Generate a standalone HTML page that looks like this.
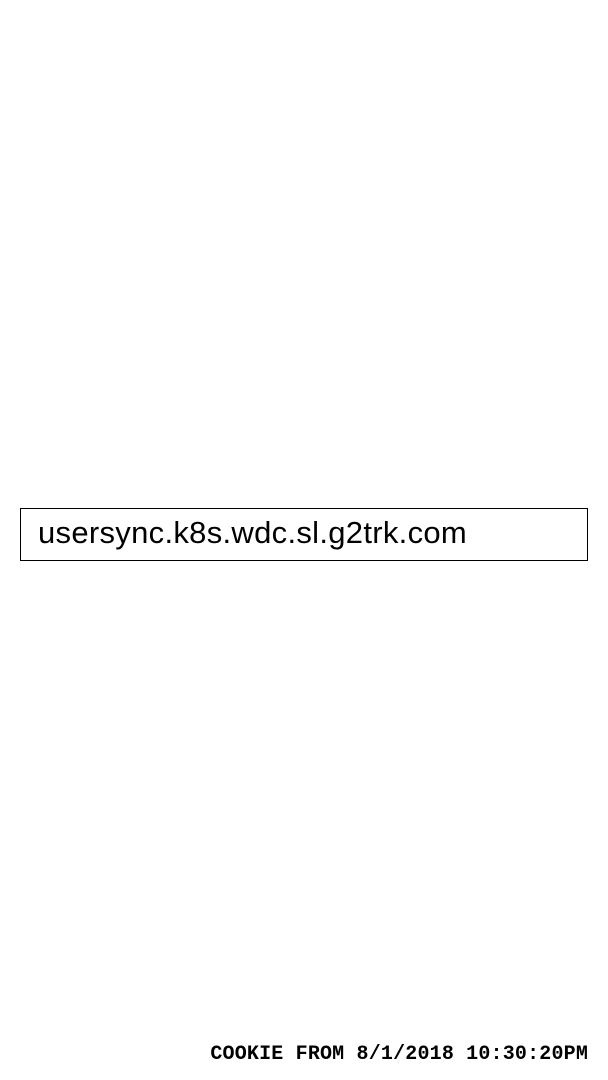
<!DOCTYPE html>
<html><head><meta charset="utf-8"><style>
html,body{margin:0;padding:0;background:#fff;width:608px;height:1080px;overflow:hidden;position:relative}
.box{position:absolute;left:20px;top:508px;width:566px;height:51px;border:1px solid #000;}
.box span{position:absolute;left:17px;top:6px;font-family:"Liberation Sans","DejaVu Sans",sans-serif;font-size:31px;line-height:36px;color:#000;letter-spacing:0.3px;white-space:nowrap}
.foot{position:absolute;right:20px;top:1043px;font-family:"Liberation Mono",monospace;font-weight:bold;font-size:20px;line-height:24px;letter-spacing:0.18px;color:#000;white-space:nowrap}
</style></head><body>
<div class="box"><span>usersync.k8s.wdc.sl.g2trk.com</span></div>
<div class="foot">COOKIE FROM 8/1/2018 10:30:20PM</div>
</body></html>
